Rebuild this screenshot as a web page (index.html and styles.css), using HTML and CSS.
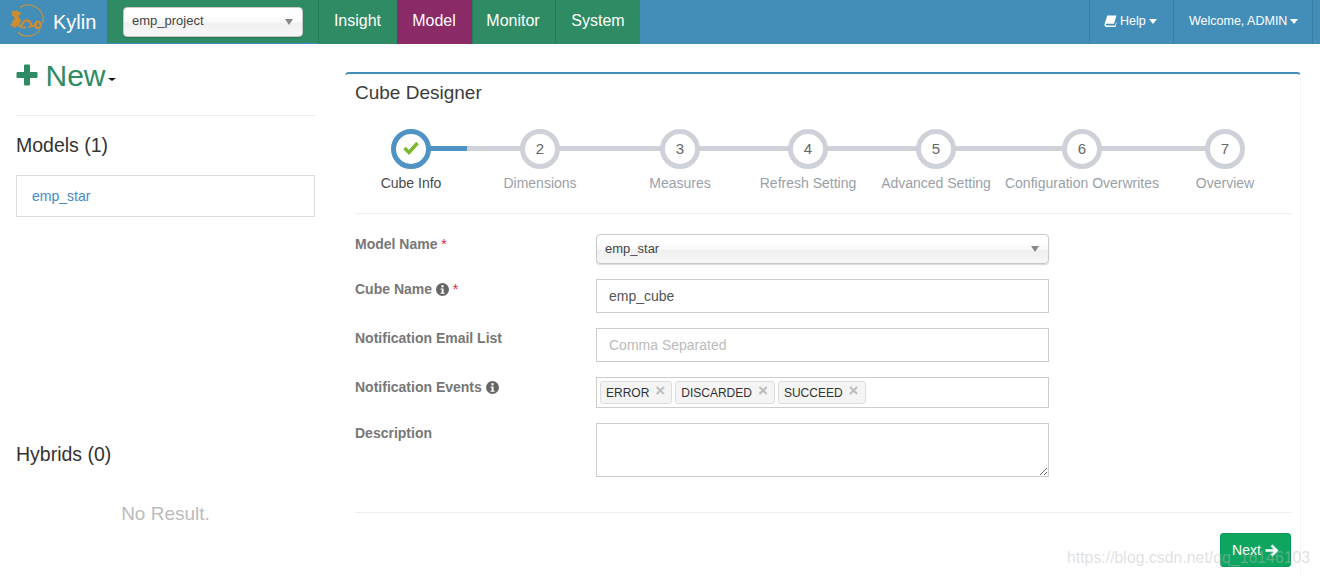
FILE: index.html
```html
<!DOCTYPE html>
<html lang="en">
<head>
<meta charset="utf-8">
<title>Kylin</title>
<link rel="stylesheet" href="styles.css">
</head>
<body>
<header class="topbar">
  <a class="brand">
    <svg class="logo" viewBox="0 0 36 36" width="36" height="36">
      <path class="logo-ring" d="M11 3.200A15 15 0 0 1 33.800 19M31 25.500A15 15 0 0 1 9 28.500"/>
      <path class="logo-fill" d="M4 6l2 1.500L8 6l1 2 3 .5-.5 2.500-2.500.5 1.500 3 2 2.500-2 2 1 2.500 1.500 1-3.500.5-1-2-2 2.500-3.500 0 1.500-2.500-2.500 1-1-1 2.500-2 0-2.500 2-1-.5-3-2.500-1 1-2.500-1.500-1.500 2-.5z"/>
      <path class="logo-curl" d="M12 24c1-6 5-9 8-7s1 6 4 5 3-6 6-4 2 6-1 6-3-3-1-4"/>
      <path class="logo-curl" d="M14 24l3-1M20 24l1-2"/>
    </svg>
    <span class="brand-name">Kylin</span>
  </a>
  <div class="project-zone">
    <div class="chosen project-select"><span>emp_project</span><i class="caret-gray"></i></div>
  </div>
  <nav class="nav">
    <a class="nav-item nav-insight">Insight</a>
    <a class="nav-item nav-model">Model</a>
    <a class="nav-item nav-monitor">Monitor</a>
    <a class="nav-item nav-system">System</a>
  </nav>
  <div class="user-nav">
    <a class="user-item user-help">
      <svg class="book" viewBox="0 0 14 13" width="13" height="12"><path d="M3.500.5h10l-2.700 9H3.200c-1 0-1.500.5-1.200 1.100.2.500.7.700 1.300.7h8.700l1-3.300.7.500-1.400 4.500H3C1.300 13 .2 11.500.5 10z"/></svg>
      Help<i class="caret-white"></i>
    </a>
    <a class="user-item user-welcome">Welcome, ADMIN<i class="caret-white"></i></a>
  </div>
</header>

<div class="page">
  <aside class="sidebar">
    <div class="new-row">
      <svg class="plus" viewBox="0 0 22 22" width="22" height="22"><path d="M8 1.500a1 1 0 0 1 1-1h4a1 1 0 0 1 1 1V8h6.500a1 1 0 0 1 1 1v4a1 1 0 0 1-1 1H14v6.500a1 1 0 0 1-1 1H9a1 1 0 0 1-1-1V14H1.500a1 1 0 0 1-1-1V9a1 1 0 0 1 1-1H8z"/></svg>
      <span class="new-label">New</span><i class="caret-black"></i>
    </div>
    <h2 class="side-title models-title">Models (1)</h2>
    <div class="model-box"><a class="model-link">emp_star</a></div>
    <h2 class="side-title hybrids-title">Hybrids (0)</h2>
    <p class="no-result">No Result.</p>
  </aside>

  <main class="panel">
    <h1 class="panel-title">Cube Designer</h1>
    <ol class="steps">
      <li class="step step-done w1">
        <span class="badge"><svg viewBox="0 0 16 14" width="16" height="14"><path class="tick" d="M1.500 7l4.500 4.500 8.500-9.500"/></svg></span>
        <span class="step-label">Cube Info</span>
      </li>
      <li class="step w2"><span class="badge">2</span><span class="step-label">Dimensions</span></li>
      <li class="step w3"><span class="badge">3</span><span class="step-label">Measures</span></li>
      <li class="step w4"><span class="badge">4</span><span class="step-label">Refresh Setting</span></li>
      <li class="step w5"><span class="badge">5</span><span class="step-label">Advanced Setting</span></li>
      <li class="step w6"><span class="badge">6</span><span class="step-label">Configuration Overwrites</span></li>
      <li class="step w7"><span class="badge">7</span><span class="step-label">Overview</span></li>
    </ol>
    <form class="form">
      <label class="field-label">Model Name <em>*</em></label>
      <div class="chosen model-select"><span>emp_star</span><i class="caret-gray"></i></div>

      <label class="field-label">Cube Name
        <svg class="info" viewBox="0 0 12 12" width="13" height="13"><circle cx="6" cy="6" r="6"/><rect class="info-i" x="5" y="2" width="2" height="2"/><path class="info-i" d="M4.200 5h2.800v4h1v1H4.200V9h1V6h-1z"/></svg>
        <em>*</em></label>
      <input class="text-input" type="text" value="emp_cube">

      <label class="field-label">Notification Email List</label>
      <input class="text-input" type="text" placeholder="Comma Separated">

      <label class="field-label">Notification Events
        <svg class="info" viewBox="0 0 12 12" width="13" height="13"><circle cx="6" cy="6" r="6"/><rect class="info-i" x="5" y="2" width="2" height="2"/><path class="info-i" d="M4.200 5h2.800v4h1v1H4.200V9h1V6h-1z"/></svg>
      </label>
      <div class="tags">
        <span class="tag">ERROR <b>×</b></span>
        <span class="tag">DISCARDED <b>×</b></span>
        <span class="tag">SUCCEED <b>×</b></span>
      </div>

      <label class="field-label">Description</label>
      <textarea class="text-area"></textarea>
    </form>
    <div class="actions">
      <button class="btn-next" type="button">Next
        <svg viewBox="0 0 14 13" width="14" height="13"><path d="M7.500.5l6 6-6 6-1.800-1.800 2.900-2.900H.5V5.200h8.100L5.700 2.300z"/></svg>
      </button>
    </div>
  </main>
</div>
<div class="watermark">https://blog.csdn.net/qq_16146103</div>
</body>
</html>
```
FILE: styles.css
```css
* { box-sizing: border-box; }
html, body { height: 100%; }
body {
  margin: 0;
  overflow: hidden;
  background: #fff;
  font-family: "Liberation Sans", Arial, sans-serif;
  font-size: 14px;
  color: #333;
}

/* top bar */
.topbar {
  display: flex;
  height: 44px;
  background: #438eb9;
  color: #fff;
}
.brand {
  display: flex;
  align-items: center;
  width: 108px;
  padding-left: 9px;
  border-right: 1px solid #2e7ea3;
}
.logo { flex: none; margin-right: 8px; }
.logo-ring { fill: none; stroke: #cf8f3a; stroke-width: 1.200; }
.logo-fill { fill: #d08c30; }
.logo-curl { fill: none; stroke: #d08c30; stroke-width: 2.200; }
.brand-name { font-size: 20px; }
.project-zone {
  display: flex;
  align-items: center;
  width: 210px;
  height: 43px;
  padding-left: 15px;
  background: #2e8b63;
}
.chosen {
  position: relative;
  display: flex;
  align-items: center;
  padding-bottom: 2px;
  border: 1px solid #c9c9c9;
  border-radius: 4px;
  background: linear-gradient(#fff 20%, #f9f9f9 50%, #f0f0f0 55%, #f6f6f6 100%);
  box-shadow: 0 1px 1px rgba(0, 0, 0, .15);
  font-size: 13px;
  color: #444;
}
.project-select { width: 180px; height: 30px; padding-left: 8px; }
.caret-gray {
  position: absolute;
  right: 9px;
  top: 50%;
  margin-top: -3px;
  border-left: 4px solid transparent;
  border-right: 4px solid transparent;
  border-top: 6px solid #888;
}
.nav { display: flex; height: 44px; }
.nav-item {
  display: flex;
  align-items: center;
  justify-content: center;
  padding: 0 2px 3px 0;
  border-left: 1px solid #277a56;
  background: #2e8b63;
  font-size: 16px;
}
.nav-insight { width: 79px; padding-right: 1px; }
.nav-model { width: 75px; background: #8a2a66; border-left-color: #8a2a66; }
.nav-monitor { width: 83px; }
.nav-system { width: 85px; padding-right: 0; }
.user-nav { display: flex; margin-left: auto; padding-right: 7px; }
.user-item {
  display: flex;
  align-items: center;
  padding-bottom: 2px;
  border-left: 1px solid #3a7ea6;
  font-size: 12.500px;
}
.user-help { width: 84px; padding-left: 14px; }
.user-welcome { width: 140px; padding-left: 15px; border-right: 1px solid #3a7ea6; }
.book { fill: #fff; margin-right: 3px; }
.caret-white {
  margin-left: 3px;
  border-left: 4.500px solid transparent;
  border-right: 4.500px solid transparent;
  border-top: 5px solid #fff;
}

/* page */
.page { display: flex; height: calc(100% - 44px); }
.sidebar { flex: none; width: 345px; padding: 12px 30px 0 16px; }
.new-row {
  display: flex;
  align-items: center;
  height: 40px;
  padding-bottom: 19px;
  box-sizing: content-box;
  border-bottom: 1px solid #eee;
  color: #2e8b63;
}
.plus { fill: #2e8b63; margin-top: -3px; margin-right: 7.500px; }
.new-label { font-size: 30px; line-height: 40px; }
.caret-black {
  margin: 6px 0 0 2px;
  border-left: 4px solid transparent;
  border-right: 4px solid transparent;
  border-top: 3.500px solid #111;
}
.side-title { margin: 0; font-size: 19.500px; font-weight: 400; line-height: 24px; color: #333; }
.models-title { margin-top: 17px; }
.model-box {
  height: 42px;
  margin-top: 18px;
  padding: 11px 15px;
  border: 1px solid #ddd;
  line-height: 18px;
}
.model-link { color: #428bca; }
.hybrids-title { margin-top: 225px; }
.no-result {
  margin: 36px 0 0;
  font-size: 19px;
  line-height: 24px;
  text-align: center;
  color: #bbb;
}

/* panel */
.panel {
  flex: none;
  width: 956px;
  margin-top: 28px;
  padding: 0 9px 0 10px;
  border-top: 2px solid #438eb9;
  border-right: 1px solid #f4f4f4;
  border-radius: 4px 4px 0 0;
}
.panel-title {
  margin: 7px 0 0;
  font-size: 19px;
  font-weight: 400;
  line-height: 24px;
  color: #3c3c3c;
}
.steps {
  display: flex;
  margin: 24px 0 0;
  padding: 0 0 20px;
  border-bottom: 1px solid #eee;
  list-style: none;
}
.step {
  position: relative;
  display: flex;
  flex-direction: column;
  align-items: center;
  white-space: nowrap;
}
.w1 { width: 112px; }
.w2 { width: 146px; }
.w3 { width: 134px; }
.w4 { width: 122px; }
.w5 { width: 134px; }
.w6 { width: 158px; }
.w7 { width: 128px; }
.step::before, .step::after {
  content: "";
  position: absolute;
  top: 17px;
  width: 50%;
  height: 5px;
  background: #ced1d8;
}
.step::before { left: 0; }
.step::after { right: 0; }
.step:first-child::before, .step:last-child::after { display: none; }
.step-done::after { background: #4f93c4; }
.badge {
  position: relative;
  z-index: 1;
  display: flex;
  align-items: center;
  justify-content: center;
  width: 40px;
  height: 40px;
  padding-bottom: 2px;
  border: 5px solid #ced1d8;
  border-radius: 50%;
  background: #fff;
  font-size: 15px;
  color: #666;
}
.step-done .badge { border-color: #4f93c4; }
.tick { fill: none; stroke: #7cb82f; stroke-width: 3.500; }
.step-label { margin-top: 4px; line-height: 20px; color: #999fa8; }
.step-done .step-label { color: #4a4a4a; }

/* form */
.form {
  display: grid;
  grid-template-columns: 241px 453px;
  row-gap: 15px;
  margin: 20px 0 0;
  padding-bottom: 35px;
  border-bottom: 1px solid #eee;
}
.field-label { font-weight: 700; line-height: 20px; color: #777; }
.field-label em { font-style: normal; font-weight: 400; color: #e02040; }
.info { fill: #666; vertical-align: -2px; }
.info-i { fill: #fff; }
.model-select { height: 30px; padding-left: 8px; }
.text-input {
  width: 100%;
  height: 34px;
  padding: 0 12px;
  border: 1px solid #ccc;
  font: 14px "Liberation Sans", Arial, sans-serif;
  color: #555;
}
.text-input::placeholder { color: #bbb; opacity: 1; }
.tags {
  display: flex;
  align-items: center;
  gap: 3px;
  height: 31px;
  padding: 0 3px;
  border: 1px solid #ccc;
}
.tag {
  display: flex;
  align-items: center;
  justify-content: space-between;
  gap: 6px;
  height: 23px;
  padding: 0 6px 0 5px;
  border: 1px solid #ddd;
  border-radius: 3px;
  background: #f4f4f4;
  font-size: 12px;
  color: #333;
}
.tag b { margin-top: -3px; font-size: 17px; font-weight: 700; color: #bbb; }
.text-area {
  display: block;
  width: 100%;
  height: 54px;
  border: 1px solid #ccc;
  font: 14px "Liberation Sans", Arial, sans-serif;
}
.actions { display: flex; justify-content: flex-end; margin-top: 20px; }
.btn-next {
  display: flex;
  align-items: center;
  justify-content: center;
  gap: 4px;
  width: 71px;
  height: 34px;
  border: 1px solid #0a9a58;
  border-radius: 3px;
  background: #0da55f;
  font: 14px "Liberation Sans", Arial, sans-serif;
  color: #fff;
}
.btn-next svg { fill: #fff; }
.watermark {
  position: absolute;
  left: 1067px;
  top: 548px;
  font-size: 15.850px;
  line-height: 20px;
  white-space: nowrap;
  color: rgba(185, 185, 185, .45);
}
```
